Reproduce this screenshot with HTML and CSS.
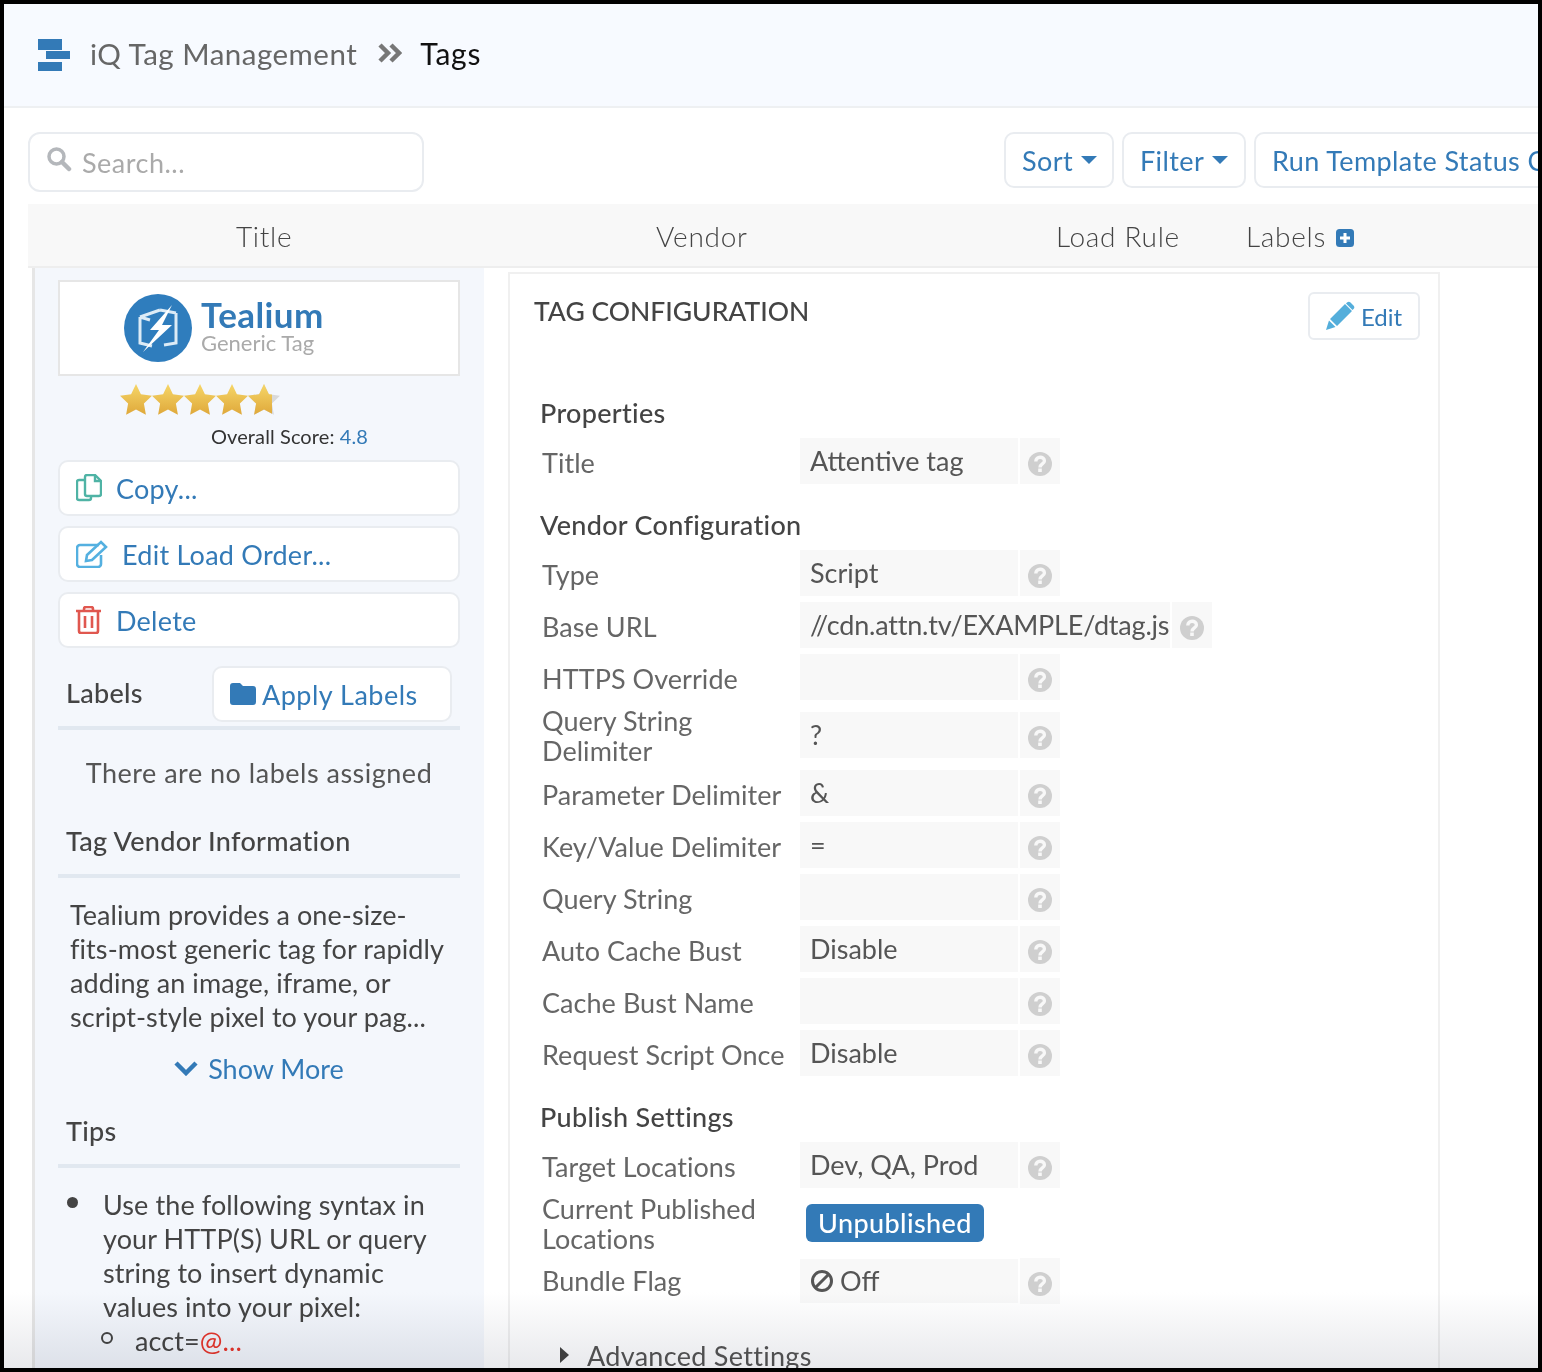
FILE: index.html
```html
<!DOCTYPE html>
<html lang="en">
<head>
  <meta charset="UTF-8">
  <meta name="viewport" content="width=device-width, initial-scale=1.0">
  <title>iQ Tag Management - Tags</title>
  <link rel="stylesheet" href="styles.css">
</head>
<body>
  <div class="frame">
    <!-- header -->
    <header class="top-bar">
      <svg class="brand" width="32" height="32" viewBox="0 0 32 32"><path fill="#337ab7" d="M0 0h24v11H0zM8 12h24v8H8zM0 23h24v9H0z"/></svg>
      <span class="crumb">iQ Tag Management</span>
      <svg class="crumb-sep" width="24" height="20" viewBox="0 0 24 20"><path fill="none" stroke="#777" stroke-width="4.500" d="M2 2l8 8-8 8M13 2l8 8-8 8"/></svg>
      <span class="crumb-current">Tags</span>
    </header>

    <!-- toolbar -->
    <div class="toolbar">
      <div class="search">
        <svg width="26" height="26" viewBox="0 0 26 26"><circle cx="10.500" cy="10.500" r="7.500" fill="none" stroke="#b4b7bb" stroke-width="3.500"/><path stroke="#b4b7bb" stroke-width="4.500" stroke-linecap="round" d="M16 16l7 7"/></svg>
        <span class="search-text">Search...</span>
      </div>
      <div class="tool-btns">
        <div class="tool-btn tool-sort">Sort <i class="caret"></i></div>
        <div class="tool-btn tool-filter">Filter <i class="caret"></i></div>
        <div class="tool-btn tool-run">Run Template Status Check</div>
      </div>
    </div>

    <!-- table head -->
    <div class="table-head">
      <span>Title</span>
      <span>Vendor</span>
      <span>Load Rule</span>
      <span class="head-labels">Labels
        <svg width="18" height="18" viewBox="0 0 18 18"><rect width="18" height="18" rx="3.500" fill="#337ab7"/><path stroke="#fff" stroke-width="3" d="M9 4v10M4 9h10"/></svg>
      </span>
    </div>

    <div class="detail">
      <!-- left column -->
      <aside class="sidebar">
        <div class="logo-box">
          <svg width="70" height="70" viewBox="0 0 70 70">
            <circle cx="35" cy="35" r="34" fill="#2f7dbd"/>
            <path fill="none" stroke="#dcebf6" stroke-width="3" d="M17 24l20-7M17 24v26l12 3M53 20v30l-12 2M37 17l16 3M17 24l10 3"/>
            <path fill="#fff" d="M49 12L27 37h9l-16 22 29-27h-10z"/>
          </svg>
          <div class="logo-text">
            <div class="logo-name">Tealium</div>
            <div class="logo-sub">Generic Tag</div>
          </div>
        </div>
        <svg class="stars" width="160" height="32" viewBox="0 0 160 32">
          <defs>
            <linearGradient id="gold" x1="0" y1="0" x2="0" y2="1"><stop offset="0" stop-color="#f6d668"/><stop offset="1" stop-color="#dfa83a"/></linearGradient>
            <path id="star" d="M16 0l4.900 10.200 11.100 1.500-8.100 7.800 2 11.300L16 25.400 6.100 30.800l2-11.300L0 11.700l11.100-1.500z"/>
            <clipPath id="part"><rect x="128" y="0" width="24" height="32"/></clipPath>
          </defs>
          <use href="#star" fill="url(#gold)"/>
          <use href="#star" x="32" fill="url(#gold)"/>
          <use href="#star" x="64" fill="url(#gold)"/>
          <use href="#star" x="96" fill="url(#gold)"/>
          <use href="#star" x="128" fill="#d9d9d9"/>
          <g clip-path="url(#part)"><use href="#star" x="128" fill="url(#gold)"/></g>
        </svg>
        <div class="score">Overall Score: <span class="score-num">4.8</span></div>

        <div class="side-btn">
          <svg width="26" height="28" viewBox="0 0 26 28"><g fill="none" stroke="#4fb3a5" stroke-width="2.400"><path d="M9 6H3a2 2 0 0 0-2 2v16a2 2 0 0 0 2 2h10a2 2 0 0 0 2-2v-2"/><path d="M9 3a2 2 0 0 1 2-2h8l6 6v13a2 2 0 0 1-2 2H11a2 2 0 0 1-2-2z"/><path d="M19 1v6h6"/></g></svg>
          Copy...
        </div>
        <div class="side-btn side-btn-edit">
          <svg width="32" height="28" viewBox="0 0 32 28"><g fill="none" stroke="#54b0e0" stroke-width="2.600"><path d="M23 5H4a3 3 0 0 0-3 3v16a3 3 0 0 0 3 3h18a3 3 0 0 0 3-3V15"/><path d="M11 15L25 2l5 5-14 13-6 1z"/></g></svg>
          Edit Load Order...
        </div>
        <div class="side-btn">
          <svg width="26" height="28" viewBox="0 0 26 28"><g fill="none" stroke="#e0574f" stroke-width="2.600"><path d="M0 5h25M8 5V3a2 2 0 0 1 2-2h5a2 2 0 0 1 2 2v2M3 5v20a2 2 0 0 0 2 2h15a2 2 0 0 0 2-2V5M9 10v12M16 10v12"/></g></svg>
          Delete
        </div>

        <div class="labels-head">
          <h3>Labels</h3>
          <div class="apply-btn">
            <svg width="26" height="22" viewBox="0 0 26 22"><path fill="#337ab7" d="M3 0h7l3 3h10a3 3 0 0 1 3 3v13a3 3 0 0 1-3 3H3a3 3 0 0 1-3-3V3a3 3 0 0 1 3-3z"/></svg>
            Apply Labels
          </div>
        </div>
        <p class="no-labels">There are no labels assigned</p>

        <h3 class="side-title">Tag Vendor Information</h3>
        <p class="vendor-text">Tealium provides a one-size-<br>fits-most generic tag for rapidly<br>adding an image, iframe, or<br>script-style pixel to your pag...</p>
        <div class="show-more">
          <svg width="24" height="16" viewBox="0 0 24 16"><path fill="none" stroke="#337ab7" stroke-width="4.500" d="M2 3l10 10L22 3"/></svg>
          Show More
        </div>

        <h3 class="side-title tips-title">Tips</h3>
        <ul class="tips">
          <li>Use the following syntax in<br>your HTTP(S) URL or query<br>string to insert dynamic<br>values into your pixel:
            <ul>
              <li>acct=<span class="red">@...</span></li>
            </ul>
          </li>
        </ul>
      </aside>

      <!-- tag configuration -->
      <section class="config">
        <div class="config-head">
          <h2>TAG CONFIGURATION</h2>
          <div class="edit-btn">
            <svg width="30" height="30" viewBox="0 0 30 30"><path fill="#54aedb" d="M20 3l7 7-15 15-7-7zM22 1.500a2.500 2.500 0 0 1 3.500 0l3 3a2.500 2.500 0 0 1 0 3.500L27.500 9l-6.500-6.500z"/><path fill="#54aedb" d="M4 19.500l6.500 6.500L1 29z"/></svg>
            Edit
          </div>
        </div>

        <h3 class="group-title group-first">Properties</h3>
        <div class="rows">
          <div class="row"><label>Title</label><div class="val">Attentive tag</div><div class="help"><svg class="q" viewBox="0 0 24 24"><use href="#qmark"/></svg></div></div>
        </div>

        <h3 class="group-title">Vendor Configuration</h3>
        <div class="rows">
          <div class="row"><label>Type</label><div class="val">Script</div><div class="help"><svg class="q" viewBox="0 0 24 24"><use href="#qmark"/></svg></div></div>
          <div class="row"><label>Base URL</label><div class="val val-auto">//cdn.attn.tv/EXAMPLE/dtag.js</div><div class="help"><svg class="q" viewBox="0 0 24 24"><use href="#qmark"/></svg></div></div>
          <div class="row"><label>HTTPS Override</label><div class="val"></div><div class="help"><svg class="q" viewBox="0 0 24 24"><use href="#qmark"/></svg></div></div>
          <div class="row row-tall"><label>Query String<br>Delimiter</label><div class="val">?</div><div class="help"><svg class="q" viewBox="0 0 24 24"><use href="#qmark"/></svg></div></div>
          <div class="row"><label>Parameter Delimiter</label><div class="val">&amp;</div><div class="help"><svg class="q" viewBox="0 0 24 24"><use href="#qmark"/></svg></div></div>
          <div class="row"><label>Key/Value Delimiter</label><div class="val">=</div><div class="help"><svg class="q" viewBox="0 0 24 24"><use href="#qmark"/></svg></div></div>
          <div class="row"><label>Query String</label><div class="val"></div><div class="help"><svg class="q" viewBox="0 0 24 24"><use href="#qmark"/></svg></div></div>
          <div class="row"><label>Auto Cache Bust</label><div class="val">Disable</div><div class="help"><svg class="q" viewBox="0 0 24 24"><use href="#qmark"/></svg></div></div>
          <div class="row"><label>Cache Bust Name</label><div class="val"></div><div class="help"><svg class="q" viewBox="0 0 24 24"><use href="#qmark"/></svg></div></div>
          <div class="row"><label>Request Script Once</label><div class="val">Disable</div><div class="help"><svg class="q" viewBox="0 0 24 24"><use href="#qmark"/></svg></div></div>
        </div>

        <h3 class="group-title">Publish Settings</h3>
        <div class="rows">
          <div class="row"><label>Target Locations</label><div class="val">Dev, QA, Prod</div><div class="help"><svg class="q" viewBox="0 0 24 24"><use href="#qmark"/></svg></div></div>
          <div class="row row-tall"><label>Current Published<br>Locations</label><span class="badge">Unpublished</span></div>
          <div class="row"><label class="label-bundle">Bundle Flag</label>
            <div class="val val-off">
              <svg width="24" height="24" viewBox="0 0 24 24"><circle cx="12" cy="12" r="9.500" fill="none" stroke="#555" stroke-width="3"/><path stroke="#555" stroke-width="3" d="M5.500 18.500l13-13"/></svg>
              Off
            </div>
            <div class="help"><svg class="q" viewBox="0 0 24 24"><use href="#qmark"/></svg></div>
          </div>
        </div>

        <div class="advanced"><i class="caret-right"></i>Advanced Settings</div>
      </section>
    </div>

    <div class="fade"></div>

    <!-- shared help icon -->
    <svg class="defs" width="0" height="0">
      <symbol id="qmark" viewBox="0 0 24 24">
        <circle cx="12" cy="12" r="12" fill="#cfcfcf"/>
        <path fill="none" stroke="#f8f8f8" stroke-width="3.400" d="M7.800 9.500c0-5.500 8.600-5.500 8.600-.5 0 3-4.400 3-4.400 6.500"/>
        <rect x="10.200" y="16.500" width="3.600" height="3.500" fill="#f8f8f8"/>
      </symbol>
    </svg>
  </div>
</body>
</html>
```

FILE: styles.css
```css
/* base */
html, body {
  margin: 0;
  padding: 0;
}

body {
  font-family: Lato, "Open Sans", sans-serif;
  color: #444;
  background: #fff;
}

.frame {
  position: relative;
  box-sizing: border-box;
  width: 1542px;
  height: 1372px;
  border: 4px solid #000;
  overflow: hidden;
}

h2, h3, p, ul {
  margin: 0;
  padding: 0;
}

.defs {
  position: absolute;
}

/* header */
.top-bar {
  display: flex;
  align-items: center;
  height: 102px;
  padding-left: 34px;
  background: #f7faff;
  border-bottom: 2px solid #eef0f2;
}

.crumb {
  margin-left: 20px;
  margin-top: -4px;
  font-size: 29.500px;
  letter-spacing: 0.5px;
  color: #666;
}

.crumb-sep {
  margin-left: 21px;
  margin-top: -4px;
}

.crumb-current {
  margin-left: 18px;
  margin-top: -4px;
  font-size: 30px;
  letter-spacing: 0.8px;
  color: #111;
}

/* toolbar */
.toolbar {
  display: flex;
  align-items: flex-start;
  gap: 580px;
  height: 96px;
  padding: 24px 0 0 24px;
  box-sizing: border-box;
}

.search {
  display: flex;
  flex: none;
  align-items: center;
  box-sizing: border-box;
  width: 396px;
  height: 60px;
  padding: 0 16px;
  border: 2px solid #e9ecf0;
  border-radius: 12px;
}

.search svg {
  margin-top: -6px;
}

.search-text {
  margin-left: 10px;
  font-size: 27px;
  letter-spacing: 0.5px;
  color: #aaa;
}

.tool-btns {
  display: flex;
  flex: none;
  gap: 8px;
}

.tool-btn {
  display: flex;
  align-items: center;
  box-sizing: border-box;
  height: 56px;
  padding: 0 16px;
  border: 2px solid #e9ecf0;
  border-radius: 10px;
  font-size: 27px;
  letter-spacing: 0.4px;
  color: #337ab7;
  white-space: nowrap;
}

.tool-sort {
  width: 110px;
}

.tool-filter {
  width: 124px;
}

.tool-run {
  width: 420px;
  overflow: hidden;
}

.caret {
  display: inline-block;
  margin-left: 8px;
  border-left: 8px solid transparent;
  border-right: 8px solid transparent;
  border-top: 8px solid #337ab7;
}

/* table head */
.table-head {
  display: grid;
  grid-template-columns: 420px 400px 190px 1fr;
  align-items: center;
  box-sizing: border-box;
  height: 64px;
  margin-left: 24px;
  padding-top: 2px;
  padding-left: 208px;
  background: #f8f8f8;
  border-bottom: 2px solid #eeeeee;
  font-size: 28px;
  font-weight: 300;
  letter-spacing: 0.7px;
  color: #444;
}

.head-labels svg {
  margin-left: 2px;
  vertical-align: 0;
}

/* detail area */
.detail {
  display: flex;
  align-items: flex-start;
  margin-left: 28px;
  gap: 24px;
}

.sidebar {
  box-sizing: border-box;
  width: 452px;
  height: 1100px;
  padding: 12px 24px 0 23px;
  background: #f4f7fc;
  border-left: 3px solid #e6e6e6;
}

.logo-box {
  display: flex;
  align-items: center;
  box-sizing: border-box;
  height: 96px;
  padding-left: 63px;
  background: #fff;
  border: 2px solid #e6e6e6;
}

.logo-text {
  margin-left: 8px;
  margin-top: -6px;
}

.logo-name {
  font-size: 35px;
  font-weight: 700;
  line-height: 36px;
  letter-spacing: 0.4px;
  color: #337ab7;
}

.logo-sub {
  font-size: 22px;
  line-height: 22px;
  color: #aaa;
}

.stars {
  display: block;
  margin: 8px 0 0 62px;
}

.score {
  margin-top: 6px;
  padding-left: 153px;
  font-size: 20px;
  line-height: 28px;
  letter-spacing: 0.1px;
  color: #333;
}

.score-num {
  color: #337ab7;
}

.side-btn {
  display: flex;
  align-items: center;
  gap: 14px;
  box-sizing: border-box;
  height: 56px;
  margin-top: 10px;
  padding-left: 16px;
  background: #fff;
  border: 2px solid #e9ecf0;
  border-radius: 10px;
  font-size: 27px;
  letter-spacing: 0.25px;
  color: #337ab7;
}

.labels-head {
  display: flex;
  align-items: center;
  justify-content: space-between;
  height: 60px;
  margin-top: 18px;
  padding-left: 8px;
  padding-right: 8px;
  border-bottom: 4px solid #e1e8f0;
}

h3 {
  font-size: 27px;
  font-weight: 500;
  letter-spacing: 0.3px;
  color: #444;
}

.labels-head h3 {
  margin-top: -8px;
}

.apply-btn {
  display: flex;
  align-items: center;
  gap: 6px;
  box-sizing: border-box;
  width: 240px;
  height: 56px;
  margin-top: -4px;
  padding-left: 16px;
  background: #fff;
  border: 2px solid #e9ecf0;
  border-radius: 10px;
  font-size: 27px;
  letter-spacing: 0.5px;
  color: #337ab7;
}

.no-labels {
  margin-top: 26px;
  font-size: 27px;
  line-height: 34px;
  letter-spacing: 0.5px;
  text-align: center;
  color: #555;
}

.side-title {
  height: 50px;
  margin-top: 34px;
  padding-left: 8px;
  line-height: 34px;
  border-bottom: 4px solid #e1e8f0;
}

.vendor-text {
  margin-top: 20px;
  padding-left: 12px;
  font-size: 27px;
  line-height: 34px;
  letter-spacing: 0.08px;
  color: #444;
}

.show-more {
  display: flex;
  align-items: center;
  justify-content: center;
  gap: 10px;
  height: 34px;
  margin-top: 17px;
  font-size: 27px;
  color: #337ab7;
}

.tips-title {
  margin-top: 29px;
}

.tips {
  margin-top: 20px;
  padding-left: 45px;
  font-size: 27px;
  line-height: 34px;
  letter-spacing: 0.1px;
  list-style: none;
  color: #444;
}

.tips li {
  position: relative;
}

.tips > li::before {
  content: "";
  position: absolute;
  left: -36px;
  top: 9px;
  width: 11px;
  height: 11px;
  border-radius: 50%;
  background: #444;
}

.tips ul {
  padding-left: 32px;
  list-style: none;
}

.tips ul li::before {
  content: "";
  position: absolute;
  left: -34px;
  top: 8px;
  box-sizing: border-box;
  width: 12px;
  height: 12px;
  border: 2px solid #444;
  border-radius: 50%;
}

.red {
  color: #e8352c;
}

/* tag configuration */
.config {
  box-sizing: border-box;
  width: 932px;
  height: 1100px;
  margin-top: 4px;
  padding: 0 0 0 32px;
  border: 2px solid #f0f0f0;
}

.config-head {
  display: flex;
  justify-content: space-between;
  align-items: flex-start;
  padding-right: 18px;
  padding-top: 18px;
}

.config-head h2 {
  margin-left: -8px;
  margin-top: 1px;
  font-size: 26.500px;
  font-weight: 500;
  line-height: 36px;
  color: #444;
}

.edit-btn {
  display: flex;
  align-items: center;
  gap: 6px;
  box-sizing: border-box;
  width: 112px;
  height: 48px;
  padding-left: 15px;
  border: 2px solid #e9ecf0;
  border-radius: 6px;
  font-size: 24px;
  color: #337ab7;
}

.group-title {
  height: 30px;
  margin-top: 26px;
  margin-bottom: 10px;
  margin-left: -2px;
  line-height: 30px;
}

.group-first {
  margin-top: 58px;
}

.rows {
  display: flex;
  flex-direction: column;
  gap: 6px;
}

.row {
  display: flex;
  align-items: center;
  min-height: 46px;
  font-size: 27px;
}

.row-tall {
  height: 58px;
}

.row label {
  flex: none;
  width: 258px;
  margin-top: 4px;
  line-height: 30px;
  letter-spacing: 0.05px;
  color: #666;
}

.row-tall label {
  margin-top: 2px;
}

.row .label-bundle {
  margin-top: 0;
}

.val {
  box-sizing: border-box;
  width: 218px;
  height: 46px;
  padding-left: 10px;
  background: #f8f8f8;
  line-height: 46px;
  color: #555;
  white-space: nowrap;
}

.val-auto {
  width: 370px;
  letter-spacing: -0.2px;
}

.val-off {
  display: flex;
  align-items: center;
  gap: 6px;
  height: 44px;
}

.help {
  display: flex;
  align-items: center;
  justify-content: center;
  width: 40px;
  height: 46px;
  margin-left: 2px;
  background: #f8f8f8;
}

.q {
  width: 24px;
  height: 24px;
  margin-top: 5px;
}

.badge {
  box-sizing: border-box;
  height: 38px;
  margin-left: 6px;
  padding: 0 12px;
  background: #337ab7;
  border-radius: 6px;
  line-height: 38px;
  font-weight: 500;
  letter-spacing: 0.4px;
  color: #fff;
}

.advanced {
  margin-top: 35px;
  margin-left: 18px;
  font-size: 27px;
  line-height: 34px;
  letter-spacing: 0.3px;
  color: #555;
}

.caret-right {
  display: inline-block;
  margin-right: 18px;
  vertical-align: 3px;
  border-top: 8px solid transparent;
  border-bottom: 8px solid transparent;
  border-left: 9px solid #444;
}

/* fade at the bottom of the view */
.fade {
  position: absolute;
  left: 0;
  right: 0;
  bottom: 0;
  height: 76px;
  background: linear-gradient(#fff, #e8e9ec);
  mix-blend-mode: multiply;
  pointer-events: none;
}
```
